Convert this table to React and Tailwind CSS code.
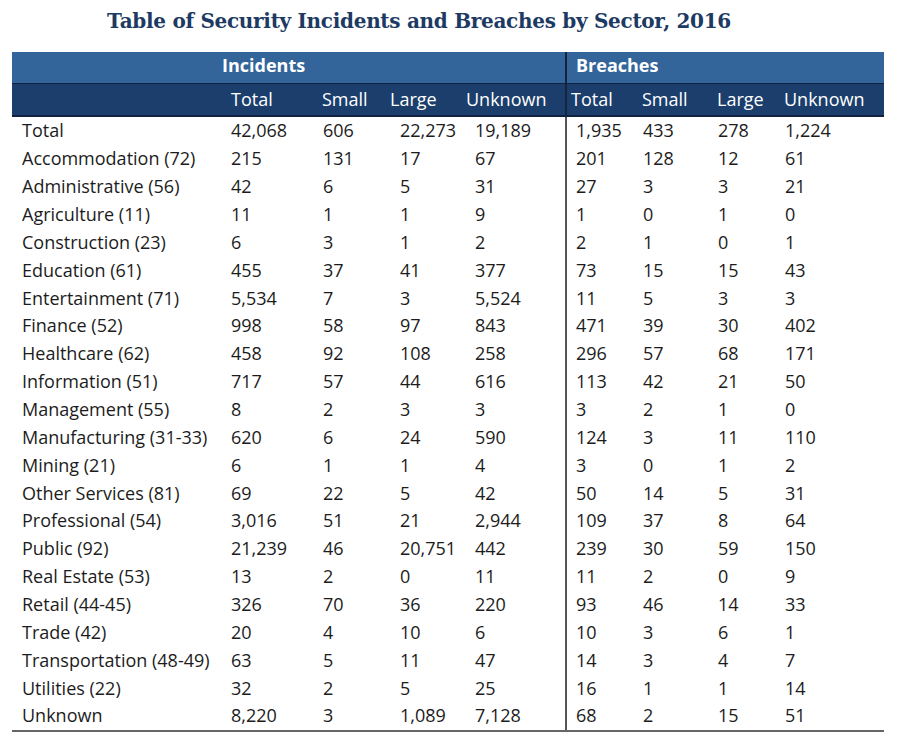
const rows = [
  ['Total', '42,068', '606', '22,273', '19,189', '1,935', '433', '278', '1,224'],
  ['Accommodation (72)', '215', '131', '17', '67', '201', '128', '12', '61'],
  ['Administrative (56)', '42', '6', '5', '31', '27', '3', '3', '21'],
  ['Agriculture (11)', '11', '1', '1', '9', '1', '0', '1', '0'],
  ['Construction (23)', '6', '3', '1', '2', '2', '1', '0', '1'],
  ['Education (61)', '455', '37', '41', '377', '73', '15', '15', '43'],
  ['Entertainment (71)', '5,534', '7', '3', '5,524', '11', '5', '3', '3'],
  ['Finance (52)', '998', '58', '97', '843', '471', '39', '30', '402'],
  ['Healthcare (62)', '458', '92', '108', '258', '296', '57', '68', '171'],
  ['Information (51)', '717', '57', '44', '616', '113', '42', '21', '50'],
  ['Management (55)', '8', '2', '3', '3', '3', '2', '1', '0'],
  ['Manufacturing (31-33)', '620', '6', '24', '590', '124', '3', '11', '110'],
  ['Mining (21)', '6', '1', '1', '4', '3', '0', '1', '2'],
  ['Other Services (81)', '69', '22', '5', '42', '50', '14', '5', '31'],
  ['Professional (54)', '3,016', '51', '21', '2,944', '109', '37', '8', '64'],
  ['Public (92)', '21,239', '46', '20,751', '442', '239', '30', '59', '150'],
  ['Real Estate (53)', '13', '2', '0', '11', '11', '2', '0', '9'],
  ['Retail (44-45)', '326', '70', '36', '220', '93', '46', '14', '33'],
  ['Trade (42)', '20', '4', '10', '6', '10', '3', '6', '1'],
  ['Transportation (48-49)', '63', '5', '11', '47', '14', '3', '4', '7'],
  ['Utilities (22)', '32', '2', '5', '25', '16', '1', '1', '14'],
  ['Unknown', '8,220', '3', '1,089', '7,128', '68', '2', '15', '51'],
]

const grid = 'grid grid-cols-[209px_92px_77px_75px_100px_68px_75px_67px_109px]'

// left padding of each cell in the data rows
const cellPad = ['pl-[10px]', 'pl-[10px]', 'pl-[10px]', 'pl-[10px]', 'pl-[10px]', 'pl-[9px] border-l-2 border-[#555]', 'pl-[10px]', 'pl-[10px]', 'pl-[10px]']

export default function App() {
  return (
    <div className="w-[901px] h-[737px] overflow-hidden bg-white text-[#1c1c1c]" style={{ fontFamily: '"Open Sans", "Noto Sans", sans-serif' }}>
      <div className="h-[40px] flex items-center pl-[107px]">
        <h1 className="text-[20px] font-bold text-[#1d3a63] tracking-[-0.3px] pt-[2px] whitespace-nowrap" style={{ fontFamily: '"DejaVu Serif", "Liberation Serif", serif' }}>
          Table of Security Incidents and Breaches by Sector, 2016
        </h1>
      </div>

      <div className="ml-[12px] mt-[12px] w-[872px]">
        {/* group header */}
        <div className={`${grid} h-[32px] bg-[#33659a] text-white text-[18px] font-bold border-b border-[#0f2340]`}>
          <div />
          <div className="col-span-4 pl-[1px] flex items-center pb-[4px]">Incidents</div>
          <div className="col-span-4 pl-[9px] border-l-2 border-[#14243a] flex items-center pb-[4px]">Breaches</div>
        </div>
        {/* column header */}
        <div className={`${grid} h-[33px] bg-[#1b3e6c] text-white text-[18px] border-b-2 border-[#0f2340]`}>
          <div />
          <div className="pl-[10px] flex items-center">Total</div>
          <div className="pl-[9px] flex items-center">Small</div>
          <div className="pl-0 flex items-center">Large</div>
          <div className="pl-[1px] flex items-center">Unknown</div>
          <div className="pl-[4px] border-l-2 border-[#14243a] flex items-center">Total</div>
          <div className="pl-[9px] flex items-center">Small</div>
          <div className="pl-[9px] flex items-center">Large</div>
          <div className="pl-[9px] flex items-center">Unknown</div>
        </div>

        <div className="border-b-2 border-[#666]">
          {rows.map((row) => (
            <div key={row[0]} className={`${grid} h-[27.86px] text-[18px]`}>
              {row.map((cell, i) => (
                <div key={i} className={`${cellPad[i]} flex items-center whitespace-nowrap`}>
                  {cell}
                </div>
              ))}
            </div>
          ))}
        </div>
        <div className="pt-[1px] text-[15px] text-[#3f76b5] whitespace-nowrap">
          Note: Refer to the appendix for a full list of NAICS codes; numbers in parentheses are the industry codes.
        </div>
      </div>
    </div>
  )
}
